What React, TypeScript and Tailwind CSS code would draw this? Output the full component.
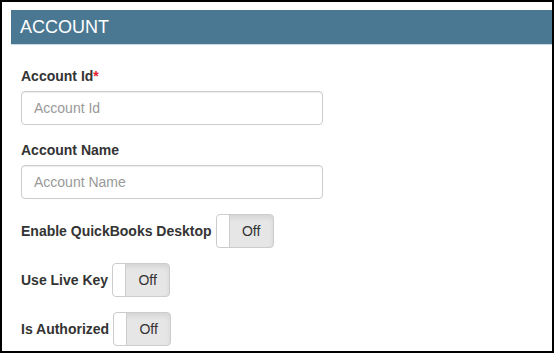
import React from "react";

const font = { fontFamily: '"Liberation Sans", Arial, sans-serif' };

function Toggle() {
  return (
    <div className="flex h-[34px] w-[58px] overflow-hidden rounded-[4px] border border-[#cccccc] bg-[#e6e6e6] shadow-[inset_0_3px_5px_rgba(0,0,0,0.08)]">
      <div className="h-full w-[13px] rounded-l-[3px] border-r border-[#cccccc] bg-white" />
      <div className="flex flex-1 items-center justify-center text-[14px] text-[#333333]">Off</div>
    </div>
  );
}

function TextField({ label, required }: { label: string; required?: boolean }) {
  return (
    <div className="mb-[15px]">
      <label className="mb-[5px] block text-[14px] font-bold leading-[20px] text-[#333333]">
        {label}
        {required && <span className="text-[#e4202f]">*</span>}
      </label>
      <input
        placeholder={label}
        className="h-[34px] w-[302px] rounded-[4px] border border-[#cccccc] px-[12px] text-[14px] text-[#555555] shadow-[inset_0_1px_1px_rgba(0,0,0,0.075)] outline-none placeholder:text-[#999999]"
        style={font}
      />
    </div>
  );
}

function ToggleField({ label }: { label: string }) {
  return (
    <div className="mb-[15px] flex items-center gap-[4px]">
      <span className="text-[14px] font-bold leading-[20px] text-[#333333]">{label}</span>
      <Toggle />
    </div>
  );
}

export default function App() {
  return (
    <div className="h-[353px] w-[554px] overflow-hidden border-2 border-black bg-white" style={font}>
      <div className="pl-[9px] pt-[8px]">
        <div className="flex h-[35px] items-center border-b border-[#c9d8e1] bg-[#4a7892] px-[9px] text-[18px] text-white">
          ACCOUNT
        </div>
        <div className="pl-[10px] pt-[21px]">
          <TextField label="Account Id" required />
          <TextField label="Account Name" />
          <ToggleField label="Enable QuickBooks Desktop" />
          <ToggleField label="Use Live Key" />
          <ToggleField label="Is Authorized" />
        </div>
      </div>
    </div>
  );
}
